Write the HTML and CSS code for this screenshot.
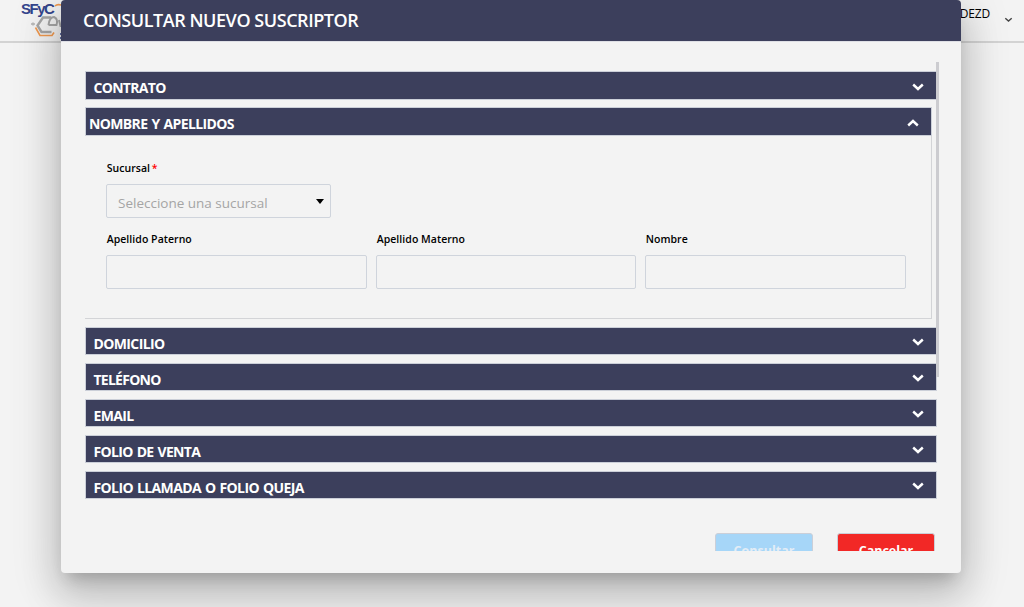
FILE: index.html
```html
<!DOCTYPE html>
<html lang="es">
<head>
<meta charset="utf-8">
<title>Consultar nuevo suscriptor</title>
<link rel="stylesheet" href="styles.css">
</head>
<body>
<header class="topbar">
  <div class="brand">
    <span class="brand-name">SFyC</span>
    <svg class="brand-mark" width="44" height="40" viewBox="0 0 44 40" fill="none">
      <path d="M35 6q2-2 6-1h3" stroke="#f0994f" stroke-width="1.700"/>
      <path d="M31 17.500H23L17.500 25.500l4 6.500h10" stroke="#a6a6a6" stroke-width="2.400"/>
      <path d="M28.500 25h8q2-6-2.500-8-4.500 0-5.500 8M39 20l1.500 6h3" stroke="#a6a6a6" stroke-width="2"/>
      <path d="M15.500 27.500l4.500 8h12l2-3" stroke="#f0994f" stroke-width="1.600"/>
      <path d="M11 24h4M13 22.500v3" stroke="#b5b5b5" stroke-width="1.500"/>
      <path d="M40 34h3M40 38h3" stroke="#34458c" stroke-width="1.500"/>
    </svg>
  </div>
  <div class="user"><span class="user-name">DEZD</span>
    <svg width="9" height="6" viewBox="0 0 9 6" fill="none"><path d="M1.300 1.200l3.200 2.800 3.200-2.800" stroke="#444" stroke-width="1.400"/></svg>
  </div>
</header>
<main class="modal">
  <h1 class="modal-title"><span class="t-title">CONSULTAR NUEVO SUSCRIPTOR</span></h1>
  <div class="modal-body">
    <div class="scroll-thumb"></div>
    <section class="bar first"><span class="t1">CONTRATO</span><svg class="chev" viewBox="0 0 12 8"><path d="M1.200 1.500L6 6l4.800-4.500"/></svg></section>
    <section class="panel">
      <div class="bar open"><span class="t2">NOMBRE Y APELLIDOS</span><svg class="chev" viewBox="0 0 12 8"><path d="M1.200 6.500L6 2l4.800 4.500"/></svg></div>
      <div class="form">
        <label class="label"><span>Sucursal</span> <span class="req">*</span></label>
        <div class="select"><span class="ph">Seleccione una sucursal</span><span class="caret"></span></div>
        <div class="fields">
          <div class="field"><label class="label"><span>Apellido Paterno</span></label><div class="input"></div></div>
          <div class="field"><label class="label"><span>Apellido Materno</span></label><div class="input"></div></div>
          <div class="field"><label class="label"><span>Nombre</span></label><div class="input"></div></div>
        </div>
      </div>
    </section>
    <section class="bar"><span class="t3">DOMICILIO</span><svg class="chev" viewBox="0 0 12 8"><path d="M1.200 1.500L6 6l4.800-4.500"/></svg></section>
    <section class="bar"><span class="t4">TELÉFONO</span><svg class="chev" viewBox="0 0 12 8"><path d="M1.200 1.500L6 6l4.800-4.500"/></svg></section>
    <section class="bar"><span class="t5">EMAIL</span><svg class="chev" viewBox="0 0 12 8"><path d="M1.200 1.500L6 6l4.800-4.500"/></svg></section>
    <section class="bar"><span class="t6">FOLIO DE VENTA</span><svg class="chev" viewBox="0 0 12 8"><path d="M1.200 1.500L6 6l4.800-4.500"/></svg></section>
    <section class="bar"><span class="t7">FOLIO LLAMADA O FOLIO QUEJA</span><svg class="chev" viewBox="0 0 12 8"><path d="M1.200 1.500L6 6l4.800-4.500"/></svg></section>
    <div class="actions">
      <div class="btn consult">Consultar</div>
      <div class="btn cancel">Cancelar</div>
    </div>
  </div>
</main>
</body>
</html>
```
FILE: styles.css
```css
* { box-sizing: border-box; }
body { margin: 0; width: 1024px; height: 607px; overflow: hidden; position: relative; background: #f3f3f3; font-family: "Open Sans", "Noto Sans", sans-serif; color: #000; }
.topbar { height: 43px; border-bottom: 2px solid #d3d3d3; display: flex; justify-content: space-between; }
.brand { position: relative; padding-left: 21px; }
.brand-name { display: block; font: 700 15px/17px "Liberation Sans", sans-serif; color: #34458c; letter-spacing: -1.5px; }
.brand-mark { position: absolute; left: 20px; top: 0; }
.user { display: flex; padding: 6px 11px 0 0; gap: 14px; font-size: 12px; line-height: 16px; }
.user-name { letter-spacing: -.2px; }
.user svg { margin-top: 11px; }
.modal { position: absolute; left: 61px; top: 0; width: 900px; height: 573px; border-radius: 4px; background: #f3f3f3; box-shadow: 0 11px 15px -7px rgba(0,0,0,.2), 0 24px 38px 3px rgba(0,0,0,.14), 0 9px 46px 8px rgba(0,0,0,.12); }
.modal-title { margin: 0; height: 41px; padding-left: 22px; border-radius: 4px 4px 0 0; background: #3c3f5c; color: #fff; font-size: 18px; font-weight: 600; line-height: 41px; white-space: nowrap; box-shadow: 0 1px #dedfe5; }
.t-title { letter-spacing: -.45px; }
.modal-body { position: relative; height: 510px; padding: 30px 24px 0; overflow: hidden; display: flex; flex-direction: column; gap: 8px; }
.scroll-thumb { position: absolute; right: 22px; top: 21px; width: 3px; height: 315px; background: #ccccd0; }
.bar { flex: none; height: 28px; border: 1px solid #cbcfd8; background: #3c3f5c; color: #fff; display: flex; align-items: center; justify-content: space-between; padding: 6px 12px 0 7.500px; font-size: 14px; font-weight: 700; line-height: 20px; letter-spacing: -.62px; word-spacing: 1px; white-space: nowrap; }
.bar.first { height: 29px; margin-bottom: -1px; padding-top: 4px; }
.bar.open { height: 29px; padding: 4px 12px 0 3px; margin: 0 -1px 0 0; }
.t1 { letter-spacing: -.7px; }
.t2 { letter-spacing: -.63px; }
.t4 { letter-spacing: -.75px; }
.t6 { letter-spacing: -.67px; }
.chev { width: 12px; height: 8px; margin-top: -4px; fill: none; stroke: #fff; stroke-width: 2.400; }
.first .chev, .open .chev { margin-top: -2px; }
.panel { flex: none; width: 847px; height: 212px; border: solid #d3d4d7; border-width: 0 1px 1px 0; }
.form { padding: 24px 25px 0 21px; }
.label { display: block; height: 16px; padding-left: .7px; font-size: 10.500px; font-weight: 600; line-height: 16px; letter-spacing: .05px; white-space: nowrap; }
.req { color: red; margin-left: -1px; }
.select, .input { height: 34px; border: 1px solid #cfd4dc; border-radius: 2px; }
.select { width: 225px; margin-top: 8px; padding: 3px 6px 0 11px; display: flex; align-items: center; justify-content: space-between; font-size: 13.500px; color: #a5a5a5; }
.caret { border: solid transparent; border-width: 5px 4.500px 0; border-top-color: #000; margin-top: -3px; }
.fields { display: grid; grid-template-columns: 261px 260px 261px; column-gap: 9px; margin-top: 13px; }
.input { margin-top: 8px; }
.actions { display: flex; flex: none; justify-content: flex-end; gap: 24px; margin-top: 26px; padding-right: 2px; }
.btn { flex: none; width: 98px; height: 35px; border: 1px solid #cbcfd8; border-radius: 3px; color: #fff; font-size: 12.500px; font-weight: 700; line-height: 33px; text-align: center; }
.consult { background: #a6d6f8; color: #e3edf6; }
.cancel { background: #f22826; }
```
